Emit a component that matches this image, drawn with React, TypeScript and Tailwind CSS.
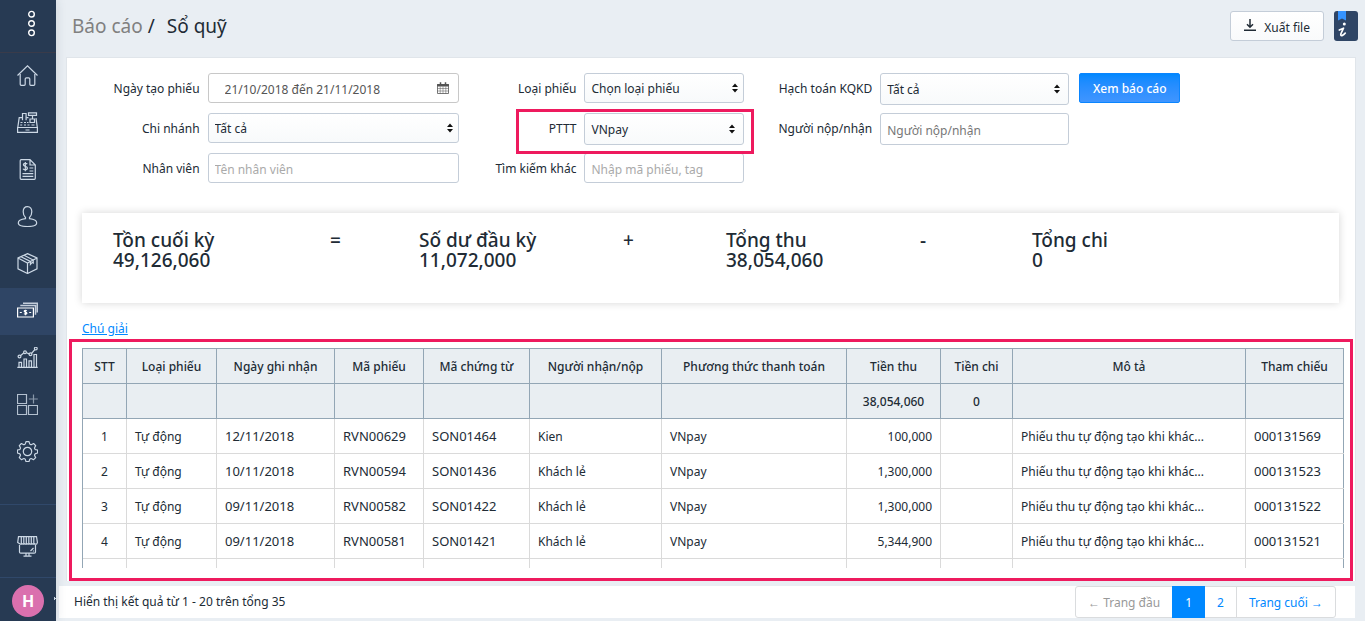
import React from "react";

type Icon = { name: string; art: React.ReactNode };

const icons: Icon[] = [
  {
    name: "Trang chủ",
    art: (
      <>
        <path d="M.5 10.500 10.500.9l10 9.600" />
        <path d="M3.200 9v10.300q0 1 1 1h3q1 0 1-1V14q0-1.200 1.200-1.200h2.200q1.200 0 1.200 1.200v5.300q0 1 1 1h3q1 0 1-1V9" />
      </>
    ),
  },
  {
    name: "Bán hàng",
    art: (
      <>
        <path d="M.6 15.500h19.800v4.900H.6zM.8 15.300 2.200 5.700h3.300M9.300 5.700h2.200M19 6.200l1.300 9.100" />
        <path d="M5.500 8.200V1.500h3.600v6.700M11.500.8h8v2.500h-8zM15.500 3.500v3M13 7h4.500v3.500H13z" />
        <path d="M3.500 10.500h2M7 10.500h2M10 10.500h1.500M3.200 13h2M7 13h2M10.500 13h2M14.500 13h3M8.500 18h4" />
      </>
    ),
  },
  {
    name: "Đơn hàng",
    art: (
      <>
        <path d="M13 .7H4.200q-1 0-1 1v17.600q0 1 1 1h13.100q1 0 1-1V6zM13 .7V6h5.300" />
        <path d="M10.300 5Q9.600 4.300 8.200 4.300 6.400 4.400 6.400 5.800c0 2 4 1.200 4 3.300 0 1.300-1 1.700-2.100 1.700-1.300 0-2-.5-2.300-1M8.300 3v9.300" />
        <path d="M12.500 9h3.800M12.500 12h3.800M5.500 14.600h10.800M5.500 17.300h10.800" />
      </>
    ),
  },
  {
    name: "Khách hàng",
    art: (
      <path d="M10.500.6c2.900 0 4.300 2.200 4.300 5.200 0 2.500-1 4.600-2.300 5.600v1.300c4.400.5 7.200 2 7.200 4.300 0 2.500-4.400 3.500-9.200 3.500S1.300 19.500 1.300 17c0-2.300 2.800-3.800 7.200-4.300v-1.300C7.200 10.400 6.200 8.300 6.200 5.800 6.200 2.800 7.600.6 10.500.6z" />
    ),
  },
  {
    name: "Sản phẩm",
    art: (
      <>
        <path d="M10.500.6 20 5v10.800l-9.500 4.700L1 15.800V5zM1 5l9.500 5L20 5M10.500 10v10.500" />
        <path d="M4 3.700 13.400 8.400v3l1.800-2 1 .6V7L7 2.300" />
      </>
    ),
  },
  {
    name: "Sổ quỹ",
    art: (
      <>
        <path d="M.6 8h15.800v9H.6z" />
        <path d="M3.300 5.500h15.200v9.200M6 3.200h14.300v9.200" strokeWidth="1.500" stroke="#c3cddb" />
        <path d="M9.800 10.700c-.8-.7-2.600-.5-2.600.5 0 1.300 2.700.7 2.700 2 0 1.200-2 1.200-2.900.4M8.500 9.700v5.600M2.800 12.500h2M12.200 12.500h2" />
      </>
    ),
  },
  {
    name: "Báo cáo",
    art: (
      <>
        <path d="M.3 20.400h20.400M2 20v-4.700h2.500V20M7 20v-8h2.500v8M12 20v-6.200h2.500V20M17 20V7.500h2.500V20" />
        <path d="M3.400 8.700 6.700 6M9.400 5.700l2.800 1.200M14.600 6.300l3.300-3.800" />
        <circle cx="2.500" cy="9.500" r="1.400" />
        <circle cx="8" cy="5.200" r="1.400" />
        <circle cx="13.500" cy="7.300" r="1.400" />
        <circle cx="18.800" cy="1.600" r="1.400" />
      </>
    ),
  },
  {
    name: "Ứng dụng",
    art: (
      <g opacity=".85">
        <path d="M.5.5h9v9h-9zM.5 11.500h9v9h-9zM11.500 11.500h9v9h-9z" />
        <path d="M16.500.5v9M11.800 5h9" opacity=".7" />
      </g>
    ),
  },
  {
    name: "Cấu hình",
    art: (
      <>
        <circle cx="10.500" cy="10.500" r="4.200" />
        <path
          d="M9 .6h3l.6 2q.2.600.8.9.7.300 1.300 0l1.900-1 2.100 2.100-1 1.900q-.3.600 0 1.300.3.600.9.800l2 .4v3l-2 .6q-.6.200-.9.800-.3.700 0 1.300l1 1.900-2.100 2.100-1.900-1q-.6-.3-1.300 0-.6.300-.8.900l-.6 2H9l-.6-2q-.2-.6-.8-.9-.7-.3-1.300 0l-1.900 1-2.100-2.100 1-1.900q.3-.6 0-1.300-.3-.6-.9-.8l-2-.6V9l2-.4q.6-.2.900-.8.3-.7 0-1.300l-1-1.900 2.100-2.100 1.900 1q.6.300 1.300 0 .6-.3.800-.9z"
          strokeLinejoin="round"
        />
      </>
    ),
  },
];

function Glyph({ children }: { children: React.ReactNode }) {
  return (
    <svg viewBox="0 0 21 21" className="size-[21px]" fill="none" stroke="currentColor" strokeWidth="1.200">
      {children}
    </svg>
  );
}

function Sidebar() {
  return (
    <aside className="relative flex w-14 shrink-0 flex-col bg-[#273a53] text-[#ccd8e5] shadow-[0_0_10px_rgba(39,58,83,0.15)]">
      <button aria-label="Mở menu" className="flex h-[53px] flex-col items-center border-b border-[#393b4a] pt-[10px] pl-[7px] text-white">
        <svg viewBox="0 0 9 27" className="h-[27px] w-[9px]" fill="none" stroke="currentColor" strokeWidth="1.400">
          <circle cx="4.500" cy="4.200" r="2.800" />
          <circle cx="4.500" cy="13.500" r="2.800" />
          <circle cx="4.500" cy="22.800" r="2.800" />
        </svg>
      </button>
      <nav>
        {icons.map((icon, i) => (
          <a
            key={icon.name}
            href="#"
            aria-label={icon.name}
            className={i === 5 ? "flex h-[47px] items-start bg-[#2f4565] pt-3 pl-[17px] text-white" : "flex h-[47px] items-start pt-3 pl-[17px]"}
          >
            <Glyph>{icon.art}</Glyph>
          </a>
        ))}
      </nav>
      <a href="#" aria-label="Kênh bán hàng" className="mt-auto flex h-[73px] items-center border-t border-[#30486a] pt-[10px] pl-[17px]">
        <Glyph>
          <path d="M1.500.6h18l.9 5.800-.5 1.300q-1.200 1-2.300 0-1.200 1-2.400 0-1.200 1-2.500 0-1.200 1-2.500 0-1.200 1-2.500 0-1.200 1-2.500 0-1.200 1-2.500 0L.7 6.400zM4.300.6v7M6.800.6v7M9.300.6v7M11.800.6v7M14.300.6v7M16.800.6v7" />
          <path d="M2.500 9v7q0 1.200 1.200 1.200h13.600q1.200 0 1.200-1.200V9M9 17.500v2.400M12 17.500v2.400M6.500 20.200h8M13.500 15l3-3M16.500 14.500v1" />
        </Glyph>
      </a>
      <div className="flex h-11 items-center justify-center border-t border-[#30486a] pt-[2px]">
        <button aria-label="Tài khoản" className="size-8 rounded-full bg-[#da70ae] text-base font-bold text-white">
          H
        </button>
        <svg viewBox="0 0 3 4" className="absolute right-0 bottom-5 h-1 w-[3px]" fill="#ccd8e5">
          <path d="M1 0h1v1h1v1H2v1H1z" />
        </svg>
      </div>
    </aside>
  );
}

const fieldBase = "w-full rounded-[3px] border border-[#c4cdd8] bg-white px-[6px] pt-[2px] outline-none";
const sizes = { sm: "h-[30px]", md: "h-8" };

function Row({ id, label, narrow, marked, children }: { id: string; label: string; narrow: string; marked?: boolean; children: React.ReactNode }) {
  return (
    <div className="relative flex h-10 items-start gap-2">
      <label htmlFor={id} className="min-w-0 flex-1 text-right leading-8 whitespace-nowrap">
        {label}
      </label>
      <div className={narrow}>{children}</div>
      {marked && <span className="pointer-events-none absolute -top-1 -right-[10px] -bottom-[1px] left-[49px] z-10 border-[3px] border-[#ee1a5e]" />}
    </div>
  );
}

function Select({ id, value, size }: { id: string; value: string; size: "sm" | "md" }) {
  return (
    <div className="relative">
      <select id={id} className={`${fieldBase} ${sizes[size]} appearance-none bg-linear-to-b from-white to-[#f8fafb] text-[#212b35]`}>
        <option>{value}</option>
      </select>
      <svg viewBox="0 0 6 10" className={`pointer-events-none absolute top-1/2 h-[10px] w-[6px] -translate-y-1/2 ${size === "md" ? "right-[9px]" : "right-[6px]"}`}>
        <path d="M0 4 3 .5 6 4zM0 6l3 3.500L6 6z" fill="#111" />
      </svg>
    </div>
  );
}

function Input({ id, placeholder, size, tone }: { id: string; placeholder: string; size: "sm" | "md"; tone: string }) {
  return <input id={id} placeholder={placeholder} className={`${fieldBase} ${sizes[size]} ${tone}`} />;
}

function Filters() {
  return (
    <form className="grid grid-cols-[377fr_278fr_317fr_262fr] gap-x-2">
      <div>
        <Row id="date" label="Ngày tạo phiếu" narrow="w-2/3">
          <div className="relative">
            <input id="date" defaultValue="21/10/2018 đến 21/11/2018" className="h-[30px] w-full rounded-[3px] border border-[#c8c8c8] px-4 pt-[2px] text-[#555] outline-none" />
            <svg viewBox="0 0 12 12" className="pointer-events-none absolute top-[9px] right-[10px] size-3" fill="none" stroke="#555">
              <path d="M.5 2.500h11v9H.5z" strokeWidth=".8" />
              <path d="M.5 2.500h11v1.500H.5z" fill="#555" />
              <path d="M3.500.3v3M8.500.3v3" strokeWidth="1.500" />
              <path d="M.5 6.500h11M.5 9h11M3.200 4.500v7M6 4.500v7M8.800 4.500v7" strokeWidth=".5" />
            </svg>
          </div>
        </Row>
        <Row id="branch" label="Chi nhánh" narrow="w-2/3"><Select id="branch" value="Tất cả" size="sm" /></Row>
        <Row id="staff" label="Nhân viên" narrow="w-2/3">
          <Input id="staff" placeholder="Tên nhân viên" size="sm" tone="placeholder:text-[#aaa]" />
        </Row>
      </div>
      <div>
        <Row id="kind" label="Loại phiếu" narrow="w-[160px]"><Select id="kind" value="Chọn loại phiếu" size="sm" /></Row>
        <Row id="method" label="PTTT" narrow="w-[160px]" marked><Select id="method" value="VNpay" size="md" /></Row>
        <Row id="search" label="Tìm kiếm khác" narrow="w-[160px]">
          <Input id="search" placeholder="Nhập mã phiếu, tag" size="sm" tone="placeholder:text-[#aaa]" />
        </Row>
      </div>
      <div>
        <Row id="account" label="Hạch toán KQKD" narrow="w-[189px]"><Select id="account" value="Tất cả" size="md" /></Row>
        <Row id="payer" label="Người nộp/nhận" narrow="w-[189px]">
          <Input id="payer" placeholder="Người nộp/nhận" size="md" tone="placeholder:text-[#777]" />
        </Row>
      </div>
      <div className="pl-[2px]">
        <button type="button" className="h-[30px] w-[101px] rounded-[2px] border border-[#0a85ff] bg-linear-to-b from-[#0088ff] to-[#3f95ff] pt-px font-medium text-white">
          Xem báo cáo
        </button>
      </div>
    </form>
  );
}

function Total({ label, value }: { label: string; value: string }) {
  return (
    <p className="whitespace-nowrap">
      {label}
      <br />
      {value}
    </p>
  );
}

const headers = ["STT", "Loại phiếu", "Ngày ghi nhận", "Mã phiếu", "Mã chứng từ", "Người nhận/nộp", "Phương thức thanh toán", "Tiền thu", "Tiền chi", "Mô tả", "Tham chiếu"];
const sums = ["", "", "", "", "", "", "", "38,054,060", "0", "", ""];
const note = "Phiếu thu tự động tạo khi khác...";
const rows = [
  ["1", "Tự động", "12/11/2018", "RVN00629", "SON01464", "Kien", "VNpay", "100,000", "", note, "000131569"],
  ["2", "Tự động", "10/11/2018", "RVN00594", "SON01436", "Khách lẻ", "VNpay", "1,300,000", "", note, "000131523"],
  ["3", "Tự động", "09/11/2018", "RVN00582", "SON01422", "Khách lẻ", "VNpay", "1,300,000", "", note, "000131522"],
  ["4", "Tự động", "09/11/2018", "RVN00581", "SON01421", "Khách lẻ", "VNpay", "5,344,900", "", note, "000131521"],
  ["", "", "", "", "", "", "", "", "", "", ""],
];

const cellStyles = [
  "text-center",
  "text-left",
  "text-[13px]",
  "text-[13px]",
  "text-[13px]",
  "text-left",
  "text-left",
  "text-right",
  "text-right",
  "text-left",
  "text-[13px]",
];

function Ledger() {
  return (
    <table className="w-full table-fixed border-collapse border border-[#93a6b5] whitespace-nowrap">
      <colgroup>
        <col className="w-[44px]" />
        <col className="w-[90px]" />
        <col className="w-[118px]" />
        <col className="w-[89px]" />
        <col className="w-[106px]" />
        <col className="w-[132px]" />
        <col className="w-[185px]" />
        <col className="w-[94px]" />
        <col className="w-[72px]" />
        <col className="w-[233px]" />
        <col />
      </colgroup>
      <thead className="bg-[#e9eef2]">
        <tr className="h-[35px]">
          {headers.map((h) => (
            <th key={h} className="border border-[#93a6b5] px-0 pt-[2px] font-medium">{h}</th>
          ))}
        </tr>
        <tr className="h-[35px]">
          {sums.map((s, i) => (
            <td key={i} className="border border-[#93a6b5] px-0 pt-[2px] text-center font-medium">{s}</td>
          ))}
        </tr>
      </thead>
      <tbody>
        {rows.map((row, r) => (
          <tr key={r} className="h-[35px] border-t border-[#dadada] first:border-[#93a6b5]">
            {row.map((cell, c) => (
              <td key={c} className={`border-l border-[#dadada] px-2 pt-[2px] first:border-[#93a6b5] ${cellStyles[c]}`}>{cell}</td>
            ))}
          </tr>
        ))}
      </tbody>
    </table>
  );
}

export default function App() {
  return (
    <div className="flex h-screen overflow-hidden bg-[#e9eef3] font-['Noto_Sans',sans-serif] text-[12px] text-[#212b35]">
      <Sidebar />
      <main className="flex min-w-0 flex-1 flex-col pr-[9px] pb-[3px] pl-[3px]">
        <header className="flex h-[57px] shrink-0 items-start justify-between pt-[11px] pl-[13px]">
          <h1 className="flex text-[19px] leading-[30px]">
            <a href="#" className="text-[#808080]">Báo cáo</a>
            <span className="pr-3 pl-[5px]">/</span>
            <span>Sổ quỹ</span>
          </h1>
          <div className="-mr-[2px] flex gap-[10px]">
            <button className="flex h-[30px] items-center gap-2 rounded-[3px] border border-[#c4cdd8] bg-linear-to-b from-white to-[#f9fafb] px-[13px]">
              <svg viewBox="0 0 12 14" className="h-[14px] w-3" fill="none" stroke="#212b35" strokeWidth="1.500">
                <path d="M6 0v8M3 5.300 6 8.200l3-2.900M0 11.200h12" />
              </svg>
              <span className="pt-1">Xuất file</span>
            </button>
            <button aria-label="Hướng dẫn" className="h-[30px] w-6">
              <svg viewBox="0 0 24 30" className="h-[30px] w-6">
                <rect width="24" height="30" rx="3" fill="#2f4565" />
                <path d="M4 0h8v9.500L8 7.500 4 9.500z" fill="#3593ff" />
                <circle cx="10.300" cy="13" r="1.500" fill="#fff" />
                <path d="M5.300 19 9.500 17.200 7 22.500q-.8 2.400 1 2.100 2-.6 3.300-2.500" fill="none" stroke="#fff" strokeWidth="1.700" strokeLinecap="round" strokeLinejoin="round" />
              </svg>
            </button>
          </div>
        </header>
        <section className="ml-[7px] flex min-h-0 flex-1 flex-col border border-b-0 border-[#e0e5ea] bg-white">
          <div className="pt-[15px] pr-4 pl-[15px]">
            <Filters />
            <div className="mt-5 grid h-[90px] grid-cols-[217fr_89fr_204fr_103fr_194fr_112fr_307fr] bg-white pt-[17px] pl-[31px] text-[19px] leading-5 font-medium shadow-[0_0_8px_rgba(0,0,0,0.17)]">
              <Total label="Tồn cuối kỳ" value="49,126,060" />
              <span>=</span>
              <Total label="Số dư đầu kỳ" value="11,072,000" />
              <span>+</span>
              <Total label="Tổng thu" value="38,054,060" />
              <span>-</span>
              <Total label="Tổng chi" value="0" />
            </div>
            <a href="#" className="mt-4 inline-block leading-5 text-[#0088ff] underline">Chú giải</a>
          </div>
          <div className="mx-[2px] flex min-h-0 flex-1 flex-col border-[3px] border-[#ee1a5e] pt-[6px] pr-[6px] pb-[10px] pl-[10px]">
            <div className="min-h-0 flex-1 overflow-hidden">
              <Ledger />
            </div>
          </div>
        </section>
        <footer className="mt-[5px] mr-px flex h-8 shrink-0 items-center justify-between bg-white pr-[19px] pl-[15px]">
          <p>Hiển thị kết quả từ 1 - 20 trên tổng 35</p>
          <nav className="flex h-8 items-stretch rounded-[3px] border border-[#dadcde] leading-[32px] text-[#0088ff]">
            <a href="#" className="px-3 text-[#999]">← Trang đầu</a>
            <a href="#" className="-my-px bg-[#0088ff] px-[13px] pt-px text-white">1</a>
            <a href="#" className="px-3">2</a>
            <a href="#" className="border-l border-[#dadcde] px-3">Trang cuối →</a>
          </nav>
        </footer>
      </main>
    </div>
  );
}
